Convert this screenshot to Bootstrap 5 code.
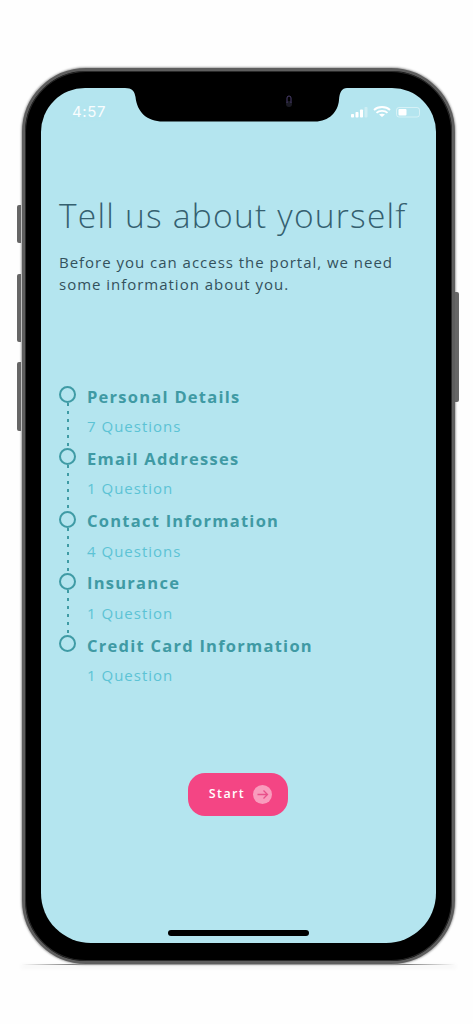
<!DOCTYPE html>
<html lang="en">
<head>
<meta charset="utf-8">
<title>Tell us about yourself</title>
<link href="https://cdn.jsdelivr.net/npm/bootstrap@5.3.0/dist/css/bootstrap.min.css" rel="stylesheet">
<style>
html,body{height:100%;overflow:hidden}
body{background:#fefefe;font-family:"Open Sans",sans-serif;padding:68px 0 0 22px}
.handset{position:relative;width:433px;height:896px;background:#000;border-radius:64px;border:3px solid #5e5e5e;box-shadow:0 0 2px 1px #a8a8a8, inset 0 0 0 1px #2a2a2a;padding:17px 16px 18px 16px}
.ground{position:absolute;left:-4px;right:-4px;bottom:-4px;height:1px;background:linear-gradient(90deg,transparent,#777 12%,#777 88%,transparent);z-index:-1;box-shadow:0 2px 5px #ddd}
.side-key{position:absolute;width:4px;background:#666;border-radius:2px 0 0 2px;left:-8px}
.side-key.k1{top:134px;height:38px}
.side-key.k2{top:203px;height:68px}
.side-key.k3{top:291px;height:69px}
.side-key.k4{left:auto;right:-7px;top:221px;height:110px;border-radius:0 2px 2px 0}
.glass{position:relative;height:100%;background:#b4e5ef;border-radius:44px 44px 50px 50px;overflow:hidden;padding:0 27px 0 18px;color:#35606f}
.notch-art{position:absolute;left:0;top:0;width:395px;height:36px}
.clock{position:absolute;left:31px;top:14px;color:#fff;font-family:Inter,sans-serif;font-size:15px;line-height:20px;opacity:.92;letter-spacing:.6px}
.status-art{position:absolute;left:310px;top:17px;width:70px;height:14px}
.headline{font-weight:300;font-size:33.5px;line-height:46px;letter-spacing:1.24px;color:#35606f;margin:104px 0 0;white-space:nowrap}
.intro{font-size:15px;line-height:22px;letter-spacing:.98px;color:#33515c;margin:13px 0 0}
.steps{margin-top:92px}
.step-row{height:62.25px}
.marker{width:17px;flex:none;margin-top:-1px}
.ring{width:17px;height:17px;border:2px solid #3f9ba5;border-radius:50%;flex:none}
.dash{width:2px;height:45px;margin-left:7.5px;background:repeating-linear-gradient(180deg,#3f9ba5 0,#3f9ba5 3px,transparent 3px,transparent 8px)}
.step-text{margin-left:-1px}
.step-name{font-weight:700;font-size:16.5px;line-height:22px;letter-spacing:1.25px;color:#3f9aa4;margin:-1.5px 0 0;white-space:nowrap}
.step-sub{font-size:15px;line-height:20px;letter-spacing:1px;color:#5cc3d5;margin:8.5px 0 0;white-space:nowrap}
.start-btn{--bs-btn-bg:#f44584;--bs-btn-hover-bg:#f44584;--bs-btn-active-bg:#f44584;--bs-btn-color:#fff;--bs-btn-hover-color:#fff;--bs-btn-border-width:0;width:100px;height:43px;border-radius:17px;font-weight:600;font-size:12.5px;letter-spacing:1.4px;padding:0 0 0 5px}
.arrow-dot{width:19px;height:19px;border-radius:50%;background:#f99cbd}
.start-zone{position:absolute;left:-1px;right:0;top:685px}
.home-bar{position:absolute;left:127px;top:842px;width:141px;height:6px;background:#000;border-radius:3px}
</style>
</head>
<body>
<div class="handset">
  <span class="side-key k1"></span><span class="side-key k2"></span><span class="side-key k3"></span><span class="side-key k4"></span>
  <div class="ground"></div>
  <div class="glass">
    <svg class="notch-art" viewBox="0 0 395 36" aria-hidden="true">
      <path d="M84 0C91 0 93.500 3 94.500 9C96 24 106 33.500 122 33.500H274C288 33.500 297 24 298 12C298.500 4 301 0 306 0Z" fill="#000"/>
      <circle cx="248" cy="16" r="3" fill="#1a1a24"/>
      <path d="M246 15V10a2 2 0 0 1 4 0V15" fill="none" stroke="#4b3f6e" stroke-width="1"/>
    </svg>
    <span class="clock">4:57</span>
    <svg class="status-art" viewBox="0 0 70 14" aria-hidden="true">
      <rect x="0" y="9" width="3" height="3.500" rx=".8" fill="#fff"/>
      <rect x="4.500" y="7" width="3" height="5.500" rx=".8" fill="#fff"/>
      <rect x="9" y="4.500" width="3" height="8" rx=".8" fill="#fff"/>
      <rect x="13.500" y="2" width="3" height="10.500" rx=".8" fill="#fff" opacity=".35"/>
      <path d="M23 5C27 1 35 1 39 5M25.500 7.800C28 5.200 34 5.200 36.500 7.800" fill="none" stroke="#fff" stroke-width="1.800"/>
      <path d="M31 12L28 9.600C29.500 8.300 32.500 8.300 34 9.600Z" fill="#fff"/>
      <rect x="45.500" y="2.500" width="23" height="9.500" rx="2.500" fill="none" stroke="#fff" stroke-opacity=".45" stroke-width="1"/>
      <rect x="47.500" y="4" width="8" height="6.500" rx="1" fill="#fff"/>
    </svg>

    <h1 class="headline">Tell us about yourself</h1>
    <p class="intro">Before you can access the portal, we need some information about you.</p>

    <div class="steps">
      <div class="step-row d-flex gap-2 align-items-start">
        <div class="marker"><div class="ring"></div><div class="dash"></div></div>
        <div class="ps-1 step-text"><p class="step-name">Personal Details</p><p class="step-sub">7 Questions</p></div>
      </div>
      <div class="step-row d-flex gap-2 align-items-start">
        <div class="marker"><div class="ring"></div><div class="dash"></div></div>
        <div class="ps-1 step-text"><p class="step-name">Email Addresses</p><p class="step-sub">1 Question</p></div>
      </div>
      <div class="step-row d-flex gap-2 align-items-start">
        <div class="marker"><div class="ring"></div><div class="dash"></div></div>
        <div class="ps-1 step-text"><p class="step-name">Contact Information</p><p class="step-sub">4 Questions</p></div>
      </div>
      <div class="step-row d-flex gap-2 align-items-start">
        <div class="marker"><div class="ring"></div><div class="dash"></div></div>
        <div class="ps-1 step-text"><p class="step-name">Insurance</p><p class="step-sub">1 Question</p></div>
      </div>
      <div class="step-row d-flex gap-2 align-items-start">
        <div class="marker"><div class="ring"></div></div>
        <div class="ps-1 step-text"><p class="step-name">Credit Card Information</p><p class="step-sub">1 Question</p></div>
      </div>
    </div>

    <div class="start-zone d-flex justify-content-center">
      <button type="button" class="btn start-btn d-inline-flex align-items-center justify-content-center gap-2">
        Start
        <span class="arrow-dot d-inline-flex align-items-center justify-content-center">
          <svg width="13" height="13" viewBox="0 0 13 13" aria-hidden="true"><path d="M1.500 6.500H11.500M7.500 2.500L11.500 6.500L7.500 10.500" fill="none" stroke="#e8508a" stroke-width="1.300"/></svg>
        </span>
      </button>
    </div>
    <div class="home-bar"></div>
  </div>
</div>
<script src="https://cdn.jsdelivr.net/npm/bootstrap@5.3.0/dist/js/bootstrap.bundle.min.js"></script>
</body>
</html>
